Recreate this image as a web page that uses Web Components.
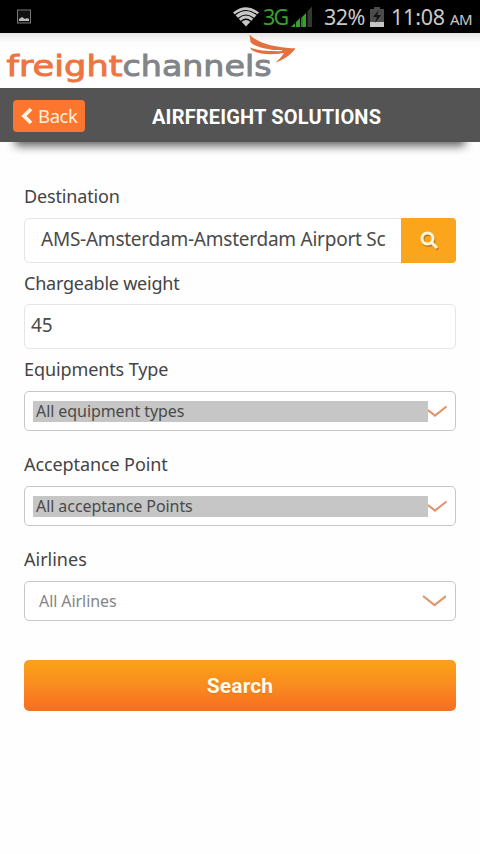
<!DOCTYPE html>
<html lang="en">
<head>
<meta charset="utf-8">
<title>Airfreight Solutions</title>
<style>
html,body{margin:0;background:#fefefe}
body{width:480px;height:854px;overflow:hidden;font-family:"Noto Sans","Open Sans",sans-serif;color:#444}
</style>
</head>
<body>
<freight-app></freight-app>
<script>
const define = (name, html) => {
  const t = document.createElement('template');
  t.innerHTML = html;
  customElements.define(name, class extends HTMLElement {
    constructor() {
      super();
      this.attachShadow({mode: 'open'}).appendChild(t.content.cloneNode(true));
    }
  });
};

define('status-bar', `
<style>
:host{display:flex;box-sizing:border-box;height:33px;background:#000;align-items:center;color:#c9c9c9;font:22px/33px "Noto Sans",sans-serif}
svg{display:block;flex:none}
.pic{margin-left:17px}
.wifi{margin-left:202px}
span{white-space:nowrap;flex:none}
.net{color:#38a02c;width:25px;margin-left:4px;font-size:21.5px;letter-spacing:-1.7px}
.sig{margin-left:3px}
.pct{width:42px;margin-left:11px;font-size:21.5px;letter-spacing:-.5px}
.bat{margin-left:4px}
.time{margin-left:7px;width:54px;font-size:21.5px;letter-spacing:-.2px}
.am{font-size:15px;margin-left:5px;padding-top:5px;letter-spacing:-.6px}
</style>
<svg class="pic" width="14" height="15" viewBox="0 0 14 15"><rect x=".5" y="1" width="13" height="13" fill="#111" stroke="#777"/><path d="M2 12V10l3-2 3 2 2-1 2 1v2z" fill="#bbb"/></svg>
<svg class="wifi" width="26" height="22" viewBox="0 0 26 22"><path d="M0 6.500Q13-4 26 6.500L13 20.500z" fill="#c6c6c6"/><path d="M2 9Q13 0 24 9M5 12.500Q13 5.500 21 12.500M8 15.500Q13 11 18 15.500" fill="none" stroke="#000" stroke-width="1.2"/></svg>
<span class="net">3G</span>
<svg class="sig" width="22" height="22" viewBox="0 0 22 22"><path d="M0 21l4-4v4zM5 21v-5l4-4v9zM10 21v-9l5-5v14z" fill="#36a22b"/><path d="M11 21V11" stroke="#176d12"/><path d="M16.500 21V5l4.500-4.500V21z" fill="#36382f"/></svg>
<span class="pct">32%</span>
<svg class="bat" width="14" height="22" viewBox="0 0 14 22"><path d="M0 3h4V1h6v2h4v18H0z" fill="#4b4b4b"/><path d="M0 16h14v5H0z" fill="#c6c6c6"/><path d="M9 4L3 11h4l-2 6 6-8H7z" fill="#111"/></svg>
<span class="time">11:08</span><span class="am">AM</span>`);

define('brand-header', `
<style>
:host{display:block;height:55px;background:linear-gradient(#e5e5e5,#fbfbfb 9px,#fff 16px)}
svg{display:block}
text{font-family:"DejaVu Sans",sans-serif;font-size:28.500px;stroke-width:.9}
</style>
<svg width="480" height="55" viewBox="0 33 480 55">
<text x="6.500" y="76" textLength="116" lengthAdjust="spacingAndGlyphs" fill="#ee7440" stroke="#ee7440">freight</text>
<text x="122.500" y="76" textLength="149" lengthAdjust="spacingAndGlyphs" fill="#828488" stroke="#828488">channels</text>
<g fill="#e2713f"><path d="M249.500 34.500C257 42.500 272 47.500 295.500 48.500L288 51.500C270 50.500 254 47 250.500 42z"/>
<path d="M250 47.500C260 51.500 274 52 287 49.500L295.500 48.500C291 54.500 284 60 275.500 62.500C279 59.500 282 56.500 284 53C270 55.500 253 54.500 250 47.500z"/></g>
<path d="M252 46C262 50 272 51 282 50.500" fill="none" stroke="#fff" stroke-width="1.100"/>
</svg>`);

define('back-button', `
<style>
:host{display:flex;box-sizing:border-box;width:72px;height:32px;border-radius:4px;background:#fc7630;align-items:center;padding-left:8px;color:#fff0dc;font:18.5px/34px "Noto Sans",sans-serif;letter-spacing:-.4px}
svg{margin-right:5px;flex:none}
</style>
<svg width="12" height="18" viewBox="0 0 12 18"><path d="M10 2L3 9l7 7" fill="none" stroke="#fff4e4" stroke-width="3.800"/></svg><slot></slot>`);

define('title-bar', `
<style>
:host{display:grid;grid-template-columns:13px 72px 1fr;align-items:center;height:54px;padding-top:.5px;box-sizing:border-box;background:#545454;position:relative}
:host::after{content:"";position:absolute;z-index:-1;left:16px;right:16px;bottom:2px;height:14px;box-shadow:0 5px 10px 1px rgba(0,0,0,.62)}
slot[name=back]::slotted(*){grid-column:2}
h1{grid-column:3;margin:0 0 0 67px;padding-top:1px;font:700 20px/54px Roboto,sans-serif;color:#fff;letter-spacing:.18px;white-space:nowrap}
</style>
<slot name="back"></slot><h1><slot></slot></h1>`);

define('form-field', `
<style>
:host{display:block}
label{display:block;height:var(--label-h,42px);font:18px/41px "Noto Sans",sans-serif;color:#444;letter-spacing:var(--ls,0);white-space:nowrap}
</style>
<label><slot name="label"></slot></label><slot></slot>`);

define('text-box', `
<style>
:host{display:flex;box-sizing:border-box;height:45px;border:1.500px solid #e6e6e6;border-radius:5px;background:#fff;font-size:19px;line-height:41px;color:#4a4a4a;white-space:nowrap;letter-spacing:var(--ls,0)}
.v{flex:1;padding-left:var(--pad,6px);overflow:hidden}
</style>
<div class="v"><slot></slot></div><slot name="action"></slot>`);

define('search-icon-button', `
<style>
:host{display:flex;box-sizing:border-box;width:55px;height:45px;margin:-1px -1px 0 0;flex:none;background:#faa51c;border-radius:0 4px 4px 0;align-items:center;justify-content:center}
</style>
<svg width="20" height="20" viewBox="0 0 20 20" fill="none" stroke-width="3"><g stroke="#b77a20" transform="translate(1 1.500)"><circle cx="8.500" cy="7.500" r="5.500"/><path d="M12.500 11.500l5.500 5.500"/></g><circle cx="8.500" cy="7.500" r="5.500" stroke="#fff6dc"/><path d="M12.500 11.500l5.500 5.500" stroke="#fff6dc"/></svg>`);

define('select-box', `
<style>
:host{display:grid;grid-template-columns:403px 1fr;align-items:center;box-sizing:border-box;height:40px;border:1.500px solid #c6c6c6;border-radius:5px;background:#fff;font-size:16px;color:#4a4a4a}
.v{margin-left:8px;padding-left:3px;height:21px;line-height:21px;background:#c6c6c6;white-space:nowrap;letter-spacing:-.07px}
:host([plain]){color:#858585}
:host([plain]) .v{background:none;padding-left:6px}
svg{display:block}
:host([plain]) svg{margin-left:-6px}
</style>
<div class="v"><slot></slot></div>
<svg width="24" height="14" viewBox="0 0 24 14"><path fill="none" stroke="#e2956b" stroke-width="2.200"/></svg>`);

define('search-button', `
<style>
:host{display:block;margin-top:39px;height:51px;border-radius:5px;background:linear-gradient(#f7a11d,#fb9c18 14%,#f98a20 52%,#fa7320 88%,#ef7325);color:#fffbe9;font:700 21px/53px Roboto,sans-serif;letter-spacing:.1px;text-align:center;text-shadow:0 1px 1px #d9791d}
</style>
<slot></slot>`);

define('freight-app', `
<style>
:host{display:block;height:854px;position:relative;z-index:0}
main{padding:34px 24px 0}
.gap{margin-top:13px}
</style>
<status-bar></status-bar>
<brand-header></brand-header>
<title-bar><back-button slot="back">Back</back-button>AIRFREIGHT SOLUTIONS</title-bar>
<main>
<form-field style="--ls:-.15px"><span slot="label">Destination</span><text-box style="--pad:16px;--ls:-.24px"><span>AMS-Amsterdam-Amsterdam Airport Sc</span><search-icon-button slot="action"></search-icon-button></text-box></form-field>
<form-field style="--ls:-.23px;--label-h:41px"><span slot="label">Chargeable weight</span><text-box style="--ls:0">45</text-box></form-field>
<form-field style="--ls:-.1px"><span slot="label">Equipments Type</span><select-box>All equipment types</select-box></form-field>
<form-field class="gap" style="--ls:-.1px"><span slot="label">Acceptance Point</span><select-box>All acceptance Points</select-box></form-field>
<form-field class="gap"><span slot="label">Airlines</span><select-box plain>All Airlines</select-box></form-field>
<search-button>Search</search-button>
</main>`);

document.querySelector('freight-app').shadowRoot.querySelectorAll('select-box').forEach(box => {
  box.shadowRoot.querySelector('path').setAttribute('d',
    box.hasAttribute('plain') ? 'M1 2l11.500 9L24 2' : 'M0 6l7 5.500L18.500 2.500');
});
</script>
</body>
</html>
